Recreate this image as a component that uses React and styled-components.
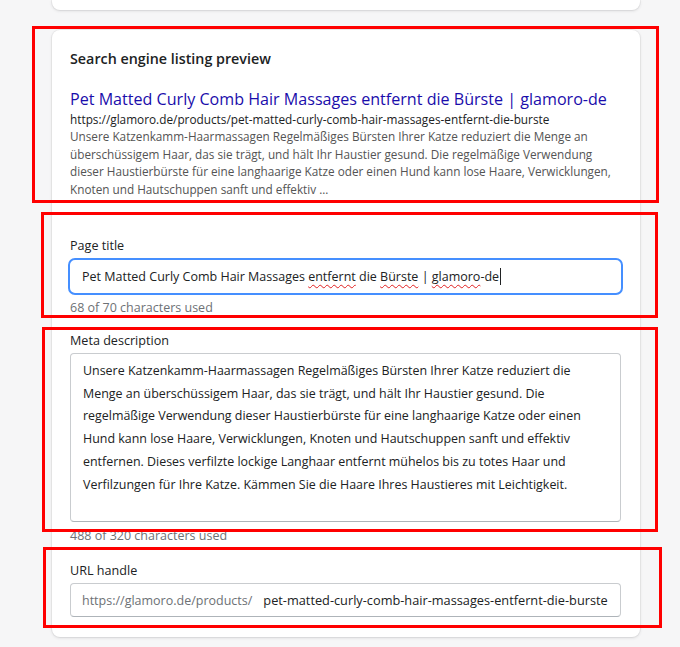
import React from 'react';
import styled, { createGlobalStyle } from 'styled-components';

const GlobalStyle = createGlobalStyle`
  html, body {
    margin: 0;
    padding: 0;
    background: #f6f6f7;
  }
  body {
    font-family: "Open Sans", "Noto Sans", sans-serif;
    color: #202223;
  }
`;

const Page = styled.div`
  position: relative;
  width: 680px;
  height: 647px;
  box-sizing: border-box;
  padding: 0 40px 0 52px;
  display: flex;
  flex-direction: column;
  gap: 20px;
  overflow: hidden;
`;

const Card = styled.div`
  background: #fff;
  border-radius: 8px;
  box-shadow: 0 0 0 1px rgba(63, 63, 68, 0.05), 0 1px 3px 0 rgba(63, 63, 68, 0.15);
`;

const StubCard = styled(Card)`
  height: 10px;
  border-radius: 0 0 8px 8px;
`;

const MainCard = styled(Card)`
  padding: 20px 19px 20px 18px;
  display: flex;
  flex-direction: column;
`;

const Heading = styled.h2`
  margin: 0;
  font-size: 14.3px;
  font-weight: 600;
  line-height: 18px;
  color: #202223;
`;

const PreviewTitle = styled.div`
  margin-top: 19px;
  font-size: 16.1px;
  line-height: 24px;
  color: #1a0dab;
  white-space: nowrap;
`;

const PreviewUrl = styled.div`
  font-size: 11.8px;
  line-height: 16px;
  color: #202223;
  white-space: nowrap;
`;

const PreviewDesc = styled.div`
  margin-top: 1px;
  font-size: 11.75px;
  line-height: 17.5px;
  color: #545454;
`;

const Line = styled.span`
  display: block;
  white-space: nowrap;
`;

const Field = styled.div`
  margin-top: ${p => p.$gap}px;
  display: flex;
  flex-direction: column;
`;

const Label = styled.label`
  font-size: 12.6px;
  line-height: 20px;
  margin-bottom: 2px;
  color: #202223;
`;

const Help = styled.div`
  margin-top: ${p => p.$gap}px;
  font-size: 12.5px;
  line-height: 20px;
  color: #6d7175;
`;

const FocusedInput = styled.div`
  height: 37px;
  box-sizing: border-box;
  margin: 0 -2px;
  border: 2px solid #458fff;
  border-radius: 7px;
  padding: 0 12px;
  font-size: 12.5px;
  line-height: 33px;
  color: #202223;
  white-space: nowrap;
`;

const Misspelled = styled.span`
  text-decoration: underline wavy #e02020;
  text-decoration-thickness: 1px;
  text-underline-offset: 3px;
`;

const Caret = styled.span`
  display: inline-block;
  width: 1px;
  height: 17px;
  background: #202223;
  margin-left: 1px;
  vertical-align: -4px;
`;

const TextArea = styled.div`
  height: 169px;
  box-sizing: border-box;
  border: 1px solid #c9cccf;
  border-bottom-color: #aeb4b9;
  border-radius: 4px;
  padding: 6px 12px;
  font-size: 12.45px;
  line-height: 22.7px;
  color: #202223;
`;

const UrlInput = styled.div`
  height: 34px;
  box-sizing: border-box;
  border: 1px solid #c9cccf;
  border-bottom-color: #aeb4b9;
  border-radius: 4px;
  padding: 0 11px;
  display: flex;
  align-items: center;
  gap: 11px;
  white-space: nowrap;
`;

const Prefix = styled.span`
  font-size: 12.5px;
  color: #6d7175;
`;

const Value = styled.span`
  font-size: 12.75px;
  color: #202223;
`;

const Marker = styled.div`
  position: absolute;
  box-sizing: border-box;
  border: 3px solid #ff0000;
  pointer-events: none;
`;

const previewLines = [
  'Unsere Katzenkamm-Haarmassagen Regelmäßiges Bürsten Ihrer Katze reduziert die Menge an',
  'überschüssigem Haar, das sie trägt, und hält Ihr Haustier gesund. Die regelmäßige Verwendung',
  'dieser Haustierbürste für eine langhaarige Katze oder einen Hund kann lose Haare, Verwicklungen,',
  'Knoten und Hautschuppen sanft und effektiv ...',
];

const metaLines = [
  'Unsere Katzenkamm-Haarmassagen Regelmäßiges Bürsten Ihrer Katze reduziert die',
  'Menge an überschüssigem Haar, das sie trägt, und hält Ihr Haustier gesund. Die',
  'regelmäßige Verwendung dieser Haustierbürste für eine langhaarige Katze oder einen',
  'Hund kann lose Haare, Verwicklungen, Knoten und Hautschuppen sanft und effektiv',
  'entfernen. Dieses verfilzte lockige Langhaar entfernt mühelos bis zu totes Haar und',
  'Verfilzungen für Ihre Katze. Kämmen Sie die Haare Ihres Haustieres mit Leichtigkeit.',
];

const markers = [
  { left: 32, top: 26, width: 627, height: 177 },
  { left: 41, top: 212, width: 617, height: 106 },
  { left: 42, top: 327, width: 616, height: 205 },
  { left: 43, top: 547, width: 619, height: 81 },
];

export default function App() {
  return (
    <>
      <GlobalStyle />
      <Page>
        <StubCard />
        <MainCard>
          <Heading>Search engine listing preview</Heading>
          <PreviewTitle>Pet Matted Curly Comb Hair Massages entfernt die Bürste | glamoro-de</PreviewTitle>
          <PreviewUrl>https://glamoro.de/products/pet-matted-curly-comb-hair-massages-entfernt-die-burste</PreviewUrl>
          <PreviewDesc>
            {previewLines.map(l => <Line key={l}>{l}</Line>)}
          </PreviewDesc>

          <Field $gap={38}>
            <Label>Page title</Label>
            <FocusedInput>
              Pet Matted Curly Comb Hair Massages <Misspelled>entfernt</Misspelled> die{' '}
              <Misspelled>Bürste</Misspelled> | <Misspelled>glamoro</Misspelled>-de<Caret />
            </FocusedInput>
            <Help $gap={3}>68 of 70 characters used</Help>
          </Field>

          <Field $gap={13}>
            <Label>Meta description</Label>
            <TextArea>
              {metaLines.map(l => <Line key={l}>{l}</Line>)}
            </TextArea>
            <Help $gap={4}>488 of 320 characters used</Help>
          </Field>

          <Field $gap={15}>
            <Label>URL handle</Label>
            <UrlInput>
              <Prefix>https://glamoro.de/products/</Prefix>
              <Value>pet-matted-curly-comb-hair-massages-entfernt-die-burste</Value>
            </UrlInput>
          </Field>
        </MainCard>

        {markers.map((m, i) => (
          <Marker key={i} style={m} />
        ))}
      </Page>
    </>
  );
}
